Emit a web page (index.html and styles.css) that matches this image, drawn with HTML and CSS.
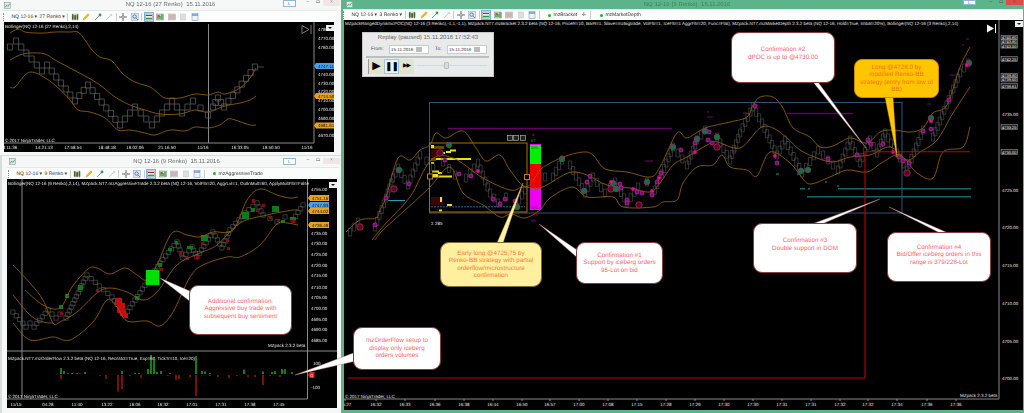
FILE: index.html
```html
<!DOCTYPE html>
<html lang="en">
<head>
<meta charset="utf-8">
<title>NQ 12-16 Renko charts</title>
<link rel="stylesheet" href="styles.css">
</head>
<body>
<svg class="sprite" aria-hidden="true">
  <symbol id="i-app" viewBox="0 0 8 8"><rect x=".5" y=".5" width="7" height="7" fill="#dfe9e6" stroke="#7a9a90" stroke-width=".6"/><path d="M1.5 6 3 3.5 4.5 5 6.5 2" fill="none" stroke="#2f8f5f" stroke-width=".8"/></symbol>
  <symbol id="i-candle" viewBox="0 0 9 8"><rect x="1" y="1" width="2" height="6" fill="#1c8c2a"/><rect x="3.6" y="2" width="2" height="5" fill="#c03030"/><rect x="6.2" y="1" width="2" height="6" fill="#1c8c2a"/><path d="M2 0v8M4.6 0v8M7.2 0v8" stroke="#333" stroke-width=".4"/></symbol>
  <symbol id="i-pencil" viewBox="0 0 8 8"><path d="M1 7 2 4.8 6 .8l1.2 1.2-4 4z" fill="#f0c020" stroke="#b08010" stroke-width=".4"/></symbol>
  <symbol id="i-arrow" viewBox="0 0 8 8"><path d="M1 7 6 2" stroke="#8a9a9a" stroke-width="1"/><circle cx="6" cy="2" r="1.4" fill="#2aa040"/></symbol>
  <symbol id="i-grey" viewBox="0 0 8 8"><path d="M1 7 6 2" stroke="#c8cccc" stroke-width="1"/><circle cx="6" cy="2" r="1.3" fill="#d4d8d8"/></symbol>
  <symbol id="i-cross" viewBox="0 0 8 8"><path d="M4 0v8M0 4h8" stroke="#444" stroke-width=".8"/><circle cx="4" cy="4" r="1.2" fill="#fff" stroke="#444" stroke-width=".5"/></symbol>
  <symbol id="i-zoom" viewBox="0 0 8 8"><rect x=".5" y=".5" width="7" height="7" fill="#dce6f0" stroke="#8aa0b8" stroke-width=".5"/><circle cx="3.6" cy="3.6" r="1.7" fill="none" stroke="#3a5a80" stroke-width=".7"/><path d="m5 5 2 2" stroke="#3a5a80" stroke-width=".7"/></symbol>
  <symbol id="i-a" viewBox="0 0 8 8"><rect x=".5" y="1" width="7" height="6" fill="#fff" stroke="#666" stroke-width=".4"/><path d="M1 2.5h6" stroke="#c02020" stroke-width="1.2"/><path d="M1 5.5h6" stroke="#20a030" stroke-width="1.6"/></symbol>
  <symbol id="i-b" viewBox="0 0 8 8"><rect x=".5" y="1" width="7" height="6" fill="#c8dcc0" stroke="#666" stroke-width=".4"/><path d="M2 2v4M4 3v3M6 1.5v5" stroke="#1c8c2a" stroke-width="1.1"/><path d="M3 2v2" stroke="#c02020"/></symbol>
  <symbol id="i-c" viewBox="0 0 8 8"><rect x=".5" y="1" width="7" height="6" fill="#d8d0d0" stroke="#999" stroke-width=".4"/><path d="M1 3h6M1 5h6" stroke="#b89090" stroke-width=".8"/></symbol>
  <symbol id="i-d" viewBox="0 0 8 8"><rect x="1.5" y="1" width="5" height="6" fill="#dde0e0" stroke="#bbb" stroke-width=".4"/></symbol>
  <symbol id="i-e" viewBox="0 0 8 8"><rect x="1" y=".5" width="6" height="7" fill="#eef3f8" stroke="#6a8aa8" stroke-width=".5"/><path d="M1 2h6" stroke="#4a80b8" stroke-width="1.2"/></symbol>
</svg>

<main class="desktop">
  <div class="left-col">
    <section class="win win-a">
      <header class="titlebar">
        <svg class="app-ic"><use href="#i-app"/></svg>
        <h2 class="title">NQ 12-16 (27 Renko)&nbsp; 15.11.2016</h2>
        <div class="controls"><span class="link-btn">L</span><span class="ctl">–</span><span class="ctl">▭</span><span class="ctl close close-pale">×</span></div>
      </header>
      <div class="toolbar">
        <span class="grip"></span><span class="tb-text">NQ 12-16 ▾</span><span class="tb-text">27 Renko ▾</span><span class="sep"></span>
        <svg class="ic"><use href="#i-candle"/></svg><svg class="ic"><use href="#i-pencil"/></svg><svg class="ic"><use href="#i-arrow"/></svg><svg class="ic"><use href="#i-grey"/></svg><span class="sep"></span>
        <svg class="ic"><use href="#i-cross"/></svg><svg class="ic"><use href="#i-zoom"/></svg><span class="sep"></span>
        <svg class="ic on"><use href="#i-a"/></svg><svg class="ic"><use href="#i-b"/></svg><svg class="ic"><use href="#i-c"/></svg><svg class="ic"><use href="#i-d"/></svg><svg class="ic"><use href="#i-e"/></svg>
      </div>
      <div class="chart chart-a">
        <svg class="plot" viewBox="4 22 330 130">
          <path class="axis" d="M314 22V143H4M208.5 24V143"/>
          <path id="bricks-a" class="bricks"/>
          <path class="bricks" d="M257 67h7"/>
          <polyline class="bb" points="10,33 18,29 25,32 35,33 45,33 55,32 70,32 78,32 85,40 92,50 100,57 112,61 122,73 135,82 150,87 158,93 165,98 180,98 195,94 208,95 218,92 225,94 240,88 250,78 256,68"/>
          <polyline class="bb" points="10,60 20,55 30,53 45,54 55,60 70,68 85,76 100,85 115,97 130,105 145,110 160,114 180,114 195,110 208,112 225,106 240,103 250,100 256,96"/>
          <polyline class="bb" points="10,87 15,87 25,75 32,72 42,76 55,85 70,100 78,110 90,112 105,118 118,130 130,130 145,133 155,135 170,130 185,131 195,127 208,128 220,125 228,119 235,120 250,125 256,125"/>
          <path class="end-ic" d="M302 25.500l7 4-7 4zM311 25v9"/>
          <text class="t" x="5" y="27.500">Bollinger(NQ 12-16 (27 Renko),2,14)</text>
          <text class="t" x="5" y="141.500">© 2017 NinjaTrader, LLC</text>
          <g class="t"><text x="318" y="31">4780.00</text><text x="318" y="40">4770.00</text><text x="318" y="48.500">4760.00</text><text x="318" y="76">4740.00</text><text x="318" y="85">4730.00</text><text x="318" y="93">4720.00</text><text x="318" y="102">4710.00</text><text x="318" y="111">4700.00</text><text x="318" y="120">4690.00</text><text x="318" y="137">4670.00</text></g>
          <path class="pill-blue" d="M316 63h18v6h-18l-2-3z"/><text class="t dk" x="318" y="67.500">4747.11</text>
          <path class="pill-or" d="M316 93h18v6h-18l-2-3z"/><text class="t dk" x="318" y="97.500">4714.50</text>
          <path class="pill-or" d="M316 122.500h18v6h-18l-2-3z"/><text class="t dk" x="318" y="127">4681.61</text>
          <g class="t mid"><text x="10" y="149">8:11:36</text><text x="44" y="149">14:21:13</text><text x="73" y="149">17:58:54</text><text x="107" y="149">18:48:18</text><text x="135" y="149">19:02:06</text><text x="167" y="149">21:16:50</text><text x="203" y="149">11/16</text><text x="240" y="149">16:33:05</text><text x="271" y="149">19:50:50</text><text x="307" y="149">11/16</text></g>
        </svg>
        <span class="dd"></span>
      </div>
    </section>

    <section class="win win-b">
      <header class="titlebar">
        <svg class="app-ic"><use href="#i-app"/></svg>
        <h2 class="title">NQ 12-16 (9 Renko)&nbsp; 15.11.2016</h2>
        <div class="controls"><span class="link-btn">L</span><span class="ctl">–</span><span class="ctl">▭</span><span class="ctl close close-pale">×</span></div>
      </header>
      <div class="toolbar">
        <span class="grip"></span><span class="tb-text">NQ 12-16 ▾</span><span class="tb-text">9 Renko ▾</span><span class="sep"></span>
        <svg class="ic"><use href="#i-candle"/></svg><svg class="ic"><use href="#i-pencil"/></svg><svg class="ic"><use href="#i-arrow"/></svg><svg class="ic"><use href="#i-grey"/></svg><span class="sep"></span>
        <svg class="ic"><use href="#i-cross"/></svg><svg class="ic"><use href="#i-zoom"/></svg><span class="sep"></span>
        <svg class="ic on"><use href="#i-a"/></svg><svg class="ic"><use href="#i-b"/></svg><svg class="ic"><use href="#i-c"/></svg><svg class="ic"><use href="#i-d"/></svg><svg class="ic"><use href="#i-e"/></svg><span class="sep"></span>
        <span class="dot"></span><span class="tb-text">mzAggressiveTrade</span>
      </div>
      <div class="chart chart-b">
        <svg class="plot" viewBox="7 179 330 229">
          <path class="axis" d="M307.500 179V399H7M7 351H337M22 179V399"/>
          <path id="bricks-b" class="bricks bricks-b"/>
          <path class="blk-g" d="M78 285h5v5h-5zM65 294h4v4h-4zM59 305h4v4h-4zM135 296h4v4h-4zM158 263h4v4h-4zM168 248h4v3h-4zM175 241h3v3h-3zM187 246h6v3h-6zM201 235h7v6h-7zM242 212h7v7h-7zM251 208h4v4h-4zM272 206h7v6h-7zM281 220h4v3h-4zM290 217h6v3h-6z"/>
          <path class="blk-r" d="M96 289h3v3h-3zM60 312h3v3h-3zM179 252h3v3h-3zM186 257h3v3h-3zM196 256h3v3h-3zM201 242h3v3h-3zM227 247h3v3h-3zM252 199h3v4h-3zM262 204h3v3h-3zM256 209h3v3h-3zM269 216h3v3h-3zM277 219h3v3h-3zM292 220h3v3h-3zM226 239h3v3h-3zM160 268h3v3h-3z"/>
          <path class="blk-hot" d="M115 298h7v7h-7zM117 303h8v10h-8zM120 310h6v6h-6zM124 314h4v4h-4z"/>
          <polyline class="bb" points="25,290 43,305 60,308 72,287 88,269 97,268 110,274 125,268 137,275 147,280 157,265 172,233 187,235 200,237 213,232 233,230 247,200 260,189 277,195 290,198 298,197"/>
          <polyline class="bb" points="13,265 30,283 43,300 53,323 60,322 77,312 97,293 110,288 127,292 143,300 157,292 177,265 200,253 217,245 240,223 267,215 293,210 298,210"/>
          <polyline class="bb" points="13,295 30,315 43,322 53,323"/>
          <polyline class="bb" points="13,323 30,340 53,337 70,340 93,322 107,300 117,307 127,321 147,321 160,326 173,312 190,277 203,265 227,257 240,257 260,245 277,224 287,223 298,225"/>
          <rect class="big-g" x="146" y="270" width="13.500" height="15"/>
          <g class="hist-g"><path d="M61 374V368M64 374V371M77 374V373M80 374V373.500M85 374V372M122 374V371M148 374V369M151 374V355M154 374V360M157 374V372M161 374V371M196 374V356M202 374V371M205 374V371.500M244 374V369.500M263 374V371.500M272 374V372M275 374V371M282 374V369M285 374V369M292 374V372M68 374V373M72 374V373M135 374V373M139 374V373M170 374V373M210 374V373"/></g>
          <g class="hist-r"><path d="M61 375V379M106 375V379M118 375V391.500M122 375V389M141 375V378M176 375V380M179 375V379M196 375V396M218 375V377M229 375V378M248 375V377M255 375V377M263 375V385M280 375V377M100 375V376M130 375V376M168 375V376M190 375V377M210 375V376M237 375V376M270 375V376"/></g>
          <text class="t" x="8" y="184.500">Bollinger(NQ 12-16 (9 Renko),2,14), MZpack.NT7.mzAggressiveTrade 2.3.2 beta (NQ 12-16, VolFltr=20, AggrLvl=1, OutlnMult=60, ApplyMultFltr=False</text>
          <text class="t" x="8" y="359.500">MZpack.NT7.mzOrderFlow 2.3.2 beta (NQ 12-16, Recnstct=True, Exp=60, TickTr=10, Ice=20)</text>
          <text class="t" x="8" y="398">© 2017 NinjaTrader, LLC</text>
          <text class="t" x="268" y="346.500">MZpack 2.3.2 beta</text>
          <g class="t"><text x="311" y="191">4755.00</text><text x="311" y="234.500">4735.00</text><text x="311" y="245">4730.00</text><text x="311" y="256">4725.00</text><text x="311" y="266.500">4720.00</text><text x="311" y="277">4715.00</text><text x="311" y="288.500">4710.00</text><text x="311" y="298.500">4705.00</text><text x="311" y="309.500">4700.00</text><text x="311" y="320.500">4695.00</text><text x="311" y="331">4690.00</text><text x="311" y="342">4685.00</text><text x="313" y="365">100</text><text x="311" y="389">-100</text></g>
          <path class="pill-or" d="M310 195h19v6h-19l-2-3z"/><text class="t dk" x="312" y="199.500">4751.16</text>
          <path class="pill-blue" d="M310 202h19v6h-19l-2-3z"/><text class="t dk" x="312" y="206.500">4747.83</text>
          <path class="pill-or" d="M310 208h19v6h-19l-2-3z"/><text class="t dk" x="312" y="212.500">4744.02</text>
          <path class="pill-or" d="M310 222h19v6h-19l-2-3z"/><text class="t dk" x="312" y="226.500">4736.49</text>
          <path class="pill-red" d="M310 372h4.500v6h-4.500l-2-3z"/><text class="t" x="310.500" y="376.500">0</text>
          <g class="t mid"><text x="16" y="406">11/15</text><text x="48" y="406">04:28</text><text x="77" y="406">11:40</text><text x="107" y="406">13:22</text><text x="135" y="406">16:06</text><text x="163" y="406">16:32</text><text x="192" y="406">17:01</text><text x="221" y="406">17:31</text><text x="250" y="406">17:38</text><text x="279" y="406">17:45</text></g>
        </svg>
        <span class="dd"></span>
      </div>
    </section>
  </div>

  <section class="win win-main">
    <header class="titlebar">
      <svg class="app-ic"><use href="#i-app"/></svg>
      <h2 class="title">NQ 12-16 (3 Renko)&nbsp; 15.11.2016</h2>
      <div class="controls"><span class="link-btn">L</span><span class="ctl">–</span><span class="ctl">▭</span><span class="ctl close">×</span></div>
    </header>
    <div class="toolbar">
      <span class="grip"></span><span class="tb-text">NQ 12-16 ▾</span><span class="tb-text">3 Renko ▾</span><span class="sep"></span>
      <svg class="ic"><use href="#i-candle"/></svg><svg class="ic"><use href="#i-pencil"/></svg><svg class="ic"><use href="#i-arrow"/></svg><svg class="ic"><use href="#i-grey"/></svg><span class="sep"></span>
      <svg class="ic"><use href="#i-cross"/></svg><svg class="ic"><use href="#i-zoom"/></svg><span class="sep"></span>
      <svg class="ic on"><use href="#i-a"/></svg><svg class="ic"><use href="#i-b"/></svg><svg class="ic"><use href="#i-c"/></svg><svg class="ic"><use href="#i-d"/></svg><svg class="ic"><use href="#i-e"/></svg><span class="sep"></span>
      <span class="dot"></span><span class="tb-text">mzBracket</span><span class="tb-plus">✛</span><span class="sep"></span>
      <span class="dot"></span><span class="tb-text">mzMarketDepth</span>
    </div>
    <div class="chart chart-main">
      <svg class="plot" viewBox="344 20 679 390">
        <path class="axis" d="M999 20V399H344"/>
        <path class="axis" d="M345 399v2M376 399v2M405 399v2M435 399v2M464 399v2M493 399v2M522 399v2M550 399v2M579 399v2M608 399v2M637 399v2M666 399v2M695 399v2M724 399v2M753 399v2M782 399v2M811 399v2M840 399v2M868 399v2M897 399v2M927 399v2M956 399v2"/>
        <rect class="zone" x="429.500" y="102.500" width="472.500" height="110.500"/>
        <path class="purple" d="M448 128.500H672M787 113.500H853"/>
        <path class="purple-dash" d="M645 161h8M707 112h2M707 117h6M743 113h4M733 151h4M927 104h4M950 75h5M962 45h2M966 39h3M905 79h2"/>
        <path class="darkred" d="M431 150h9v7h-9zM431 197h12v8h-12z"/>
        <path class="olive" d="M431 146h13v3h-13zM431 158h5v3h-5z"/>
        <path class="yellow" d="M431 145h3v3h-3zM438 152h7v2h-7zM446 151h5v2h-5zM450 149.500h6v2h-6zM436 158h35v2h-35zM431 162h3v2h-3zM432 170.500h7v2h-7zM438 172h4v2h-4zM432 175.500h20v2h-20zM432 174h6v2h-6zM440 197h2v5h-2zM447 204h5v2h-5zM439 209.500h3v2h-3z"/>
        <path class="cyan-dash" d="M431 206.800H525"/>
        <path class="cyan" d="M388 200.500h17"/>
        <rect class="obox" x="429.500" y="143" width="97.500" height="69"/>
        <rect class="ohandle" x="427.500" y="174" width="5" height="5"/>
        <rect class="ohandle" x="524.500" y="174.500" width="5" height="5"/>
        <g class="mini"><rect x="507.500" y="135.500" width="5" height="5"/><rect x="513.500" y="135.500" width="5" height="5"/><rect x="520.500" y="135.500" width="5" height="5"/></g>
        <rect class="h-mag" x="530" y="144" width="11" height="1.500"/>
        <rect class="h-grn" x="530" y="145" width="11" height="19"/>
        <rect class="h-red" x="530" y="164" width="11" height="24"/>
        <rect class="h-mag" x="530" y="188" width="11" height="22"/>
        <path id="bricks-main" class="bricks bricks-thin"/>
        <polyline class="bb" points="346,232 360,220 376,218 380,210 386,197 398,158 410,160 420,150 430,145 436,133 446,138 463,131 476,148 486,161 500,155 510,170 526,187 540,170 547,165 563,157 583,152 593,155 605,169 627,172 650,177 660,167 677,133 687,138 705,128 730,122 747,117 753,105 760,97 773,97 783,108 793,128 810,137 820,147 833,146 850,138 867,143 880,132 893,130 910,132 923,128 933,113 947,105 960,67 970,47"/>
        <polyline class="bb" points="372,240 386,223 410,197 431,160 453,158 483,178 510,190 523,187 540,188 560,177 572,172 587,175 607,185 630,188 650,192 660,183 673,165 687,157 707,145 717,142 740,148 760,128 773,128 787,138 800,150 817,158 833,162 850,157 870,155 890,147 907,160 920,152 937,140 953,113 970,87"/>
        <polyline class="bb" points="375,240 383,230 413,203 430,187 450,167 463,193 483,205 500,217 511,214 525,218 540,210 550,198 572,187 587,197 613,197 623,207 653,207 663,202 677,200 683,183 697,167 713,165 722,155 730,167 747,170 757,176 770,152 790,163 800,175 810,184 830,177 847,170 867,172 883,162 900,155 917,173 933,178 943,152 963,147 970,127"/>
        <g id="dots"></g>
        <path class="teal" d="M838 188.700H971M807 196.700H971M800 188.700h5M808 188.700h2M776 174h3M797 174h2M825 182h2M837 186h2"/>
        <path class="redline" d="M348 378H865V151.700H970"/>
        <path class="end-main" d="M987 24.500l7 4-7 4z"/><path class="end-main-bar" d="M995.500 24v9"/>
        <text class="t" x="345" y="25">MZpackRangedDynamicPOC(NQ 12-16 (3 Renko),-1,1,-1,1), MZpack.NT7.mzBracket 2.3.2 beta (NQ 12-16, PriceR=10, BarR=1, Slave=mzBigtrade, VolFltr=1, IceFltr=1 AggrFltr=20, Func=Flat), MZpack.NT7.mzMarketDepth 2.3.2 beta (NQ 12-16, Hold=True, Imbal=20%), Bollinger(NQ 12-16 (3 Renko),2,14)</text>
        <text class="t" x="431" y="225">Σ 285</text>
        <text class="t tiny-mag" x="532" y="135.500">4</text><text class="t tiny-grn" x="531" y="142">67</text>
        <text class="t tiny-dk" x="531" y="149">20%</text><text class="t tiny-dk" x="531" y="209">50%</text>
        <text class="t tiny-red" x="531" y="216">196</text><text class="t tiny-mag" x="531" y="222">95</text>
        <text class="t" x="345" y="398">© 2017 NinjaTrader, LLC</text>
        <text class="t" x="960" y="396.500">MZpack 2.3.2 beta</text>
        <g class="t"><text x="1002" y="116">4735.00</text><text x="1002" y="191.500">4725.00</text><text x="1002" y="229">4720.00</text><text x="1002" y="267">4715.00</text><text x="1002" y="304.500">4710.00</text><text x="1002" y="343">4705.00</text><text x="1002" y="380">4700.00</text></g>
        <g class="boxed"><rect x="1001" y="35.500" width="16.500" height="4.200"/><rect x="1001" y="39.700" width="16.500" height="4.200"/><rect x="1001" y="43.900" width="16.500" height="4.200"/><rect x="1001" y="56.500" width="16.500" height="5"/><rect x="1001" y="73.500" width="16.500" height="4.200"/><rect x="1001" y="77.700" width="16.500" height="4.200"/><rect x="1001" y="83.500" width="16.500" height="5"/><rect x="1001" y="124.500" width="16.500" height="5"/><rect x="1001" y="149.500" width="16.500" height="5"/></g>
        <g class="t t-stack"><text x="1002" y="39.200">4745.80</text><text x="1002" y="43.400">4743.80</text><text x="1002" y="47.600">4743.50</text><text x="1002" y="60.500">4742.25</text><text x="1002" y="77.200">4739.80</text><text x="1002" y="81.400">4739.50</text><text x="1002" y="87.500">4738.61</text><text x="1002" y="128.500">4733.25</text><text x="1002" y="153.500">4730.00</text></g>
        <g class="t mid"><text x="347" y="406">6:27</text><text x="376" y="406">16:32</text><text x="405" y="406">16:33</text><text x="435" y="406">16:36</text><text x="464" y="406">16:38</text><text x="493" y="406">16:44</text><text x="522" y="406">16:50</text><text x="550" y="406">16:57</text><text x="579" y="406">17:00</text><text x="608" y="406">17:08</text><text x="637" y="406">17:15</text><text x="666" y="406">17:28</text><text x="695" y="406">17:29</text><text x="724" y="406">17:30</text><text x="753" y="406">17:30</text><text x="782" y="406">17:31</text><text x="811" y="406">17:31</text><text x="840" y="406">17:32</text><text x="868" y="406">17:32</text><text x="897" y="406">17:34</text><text x="927" y="406">17:36</text><text x="956" y="406">17:36</text></g>
      </svg>
      <span class="dd dd-main"></span>

      <aside class="replay">
        <div class="replay-title">Replay (paused) 15.11.2016 17:52:43</div>
        <div class="replay-dates">
          <span class="rp-lbl">From:</span><span class="rp-date">15.11.2016<i class="rp-cal"></i></span>
          <span class="rp-lbl rp-to">To:</span><span class="rp-date">15.11.2016<i class="rp-cal"></i></span>
        </div>
        <div class="replay-sep"></div>
        <div class="replay-ctl">
          <span class="rp-btn">▶</span><span class="rp-btn rp-sel">❚❚</span><span class="rp-btn rp-ff">▶▶</span>
          <span class="rp-slider"><i class="rp-thumb"></i></span>
        </div>
      </aside>
    </div>
  </section>

  <svg class="tails" viewBox="0 0 1024 413">
    <polygon class="tail" points="160,278 192,292 192,303"/>
    <polygon class="tail" points="295,375 356,352 356,361"/>
    <polygon class="tail tail-y" points="523,183 497,243 503,243"/>
    <polygon class="tail" points="539,224 580,252 580,260"/>
    <polygon class="tail" points="866,148 813,82 818,82"/>
    <polygon class="tail tail-o" points="897,157 885,97 893,97"/>
    <polygon class="tail" points="880,199 812,224 822,224"/>
    <polygon class="tail" points="889,207 940,233 948,233"/>
  </svg>

  <div class="note n-add">Additional confirmation.<br>Aggressive buy trade with<br>subsequent buy sentiment</div>
  <div class="note n-flow">mzOrderFlow setup to<br>display only iceberg<br>orders volumes</div>
  <div class="note note-y n-early">Early long @4725,75 by<br>Renko-BB strategy with partial<br>orderflow/microstructure<br>confirmation</div>
  <div class="note n-c1">Confirmation #1<br>Support by iceberg orders<br>95-Lot on bid</div>
  <div class="note n-c2">Confirmation #2<br>dPOC is up to @4730.00</div>
  <div class="note note-o n-long">Long @4728.0 by<br>modified Renko-BB<br>strategy (entry from low of<br>BB)</div>
  <div class="note n-c3">Confirmation #3<br>Double support in DOM</div>
  <div class="note n-c4">Confirmation #4<br>Bid/Offer iceberg orders in this<br>range is 379/228-Lot</div>
</main>
<script src="chart.js"></script>
</body>
</html>
```

FILE: styles.css
```css
* { box-sizing: border-box; margin: 0; padding: 0; }
html, body { width: 1024px; height: 413px; overflow: hidden; background: #f4f6f6; }
body { font-family: "Liberation Sans", Arial, sans-serif; text-rendering: geometricPrecision; }
.sprite { display: none; }

.desktop {
  position: relative;
  display: grid;
  grid-template-columns: 341px 683px;
  width: 1024px;
  height: 413px;
  filter: blur(0.4px);
}
.left-col { display: flex; flex-direction: column; gap: 2px; }

.win { display: flex; flex-direction: column; background: #f6f8f8; min-height: 0; }
.win-a { height: 153px; padding: 0 7px 1px 4px; }
.win-b { height: 258px; padding: 0 4px 5px 5px; border-left: 2px solid #d8dcdc; border-top: 1px solid #d8dcdc; }
.win-main { height: 413px; background: #5cb48a; padding: 0 1px 3px 3px; }

.titlebar { display: flex; align-items: center; position: relative; flex: none; }
.win-a .titlebar { height: 10px; margin-left: -2px; }
.win-b .titlebar { height: 11px; }
.win-main .titlebar { height: 9px; }
.app-ic { width: 7px; height: 7px; margin-left: 2px; flex: none; }
.title { flex: 1; text-align: center; font-size: 5.900px; font-weight: normal; color: #666; white-space: nowrap; word-spacing: .2px; }
.win-a .title { padding-right: 4px; }
.win-main .title { color: #3f7d60; padding-right: 2px; }
.controls { position: absolute; right: 0; top: 0; display: flex; align-items: flex-start; height: 7px; }
.win-a .controls { right: -6px; }
.win-b .controls { right: -3px; top: 2px; }
.link-btn { width: 13px; height: 7px; border: 1px solid #8fb8dc; background: #fff; color: #667; font-size: 4.500px; line-height: 5px; text-align: center; margin-right: 7px; }
.ctl { width: 10px; height: 6px; font-size: 5px; line-height: 5px; text-align: center; color: #555; }
.close { width: 17px; background: #f0f0f0; color: #888; margin-left: 0; }
.win-main .close { background: #df4a4a; color: #fff; height: 5px; }
.win-main .ctl { color: #2e5c46; }
.win-main .link-btn { height: 5px; line-height: 3px; margin-right: 10px; }
.close-pale { background: #f1e6e6; }

.toolbar { display: flex; align-items: center; flex: none; gap: 2.500px; background: #fbfcfc; border-top: 1px solid #e4e8e8; }
.win-a .toolbar { height: 12px; margin-left: -2px; margin-right: -2px; padding-left: 1px; }
.win-b .toolbar { height: 12px; margin-right: -2px; padding-left: 1px; }
.win-main .toolbar { height: 11px; margin-left: -1px; }
.grip { width: 1px; height: 8px; border-left: 1px dotted #888; margin-right: 5px; }
.tb-text { font-size: 5px; color: #333; white-space: nowrap; }
.sep { width: 1px; height: 8px; background: #c8cccc; }
.ic { width: 8px; height: 8px; flex: none; }
.ic.on { outline: 1px solid #7fb2e0; background: #d8e8f8; }
.ic + .ic { margin-left: 1px; }
.dot { width: 3px; height: 3px; border-radius: 50%; background: #18b828; margin-left: 6px; flex: none; }
.tb-plus { font-size: 5px; color: #444; margin: 0 2px; }

.chart { position: relative; flex: 1; background: #000; min-height: 0; }
.plot { display: block; width: 100%; height: 100%; overflow: hidden; }
.dd { position: absolute; right: 0; top: 3px; width: 8px; height: 6px; background: #eef0f0; }
.dd::after { content: ""; position: absolute; left: 2px; top: 2px; border: 2px solid transparent; border-top: 2px solid #111; }
.dd-main { top: 1px; right: 0; }

.axis { stroke: #8a8a8a; stroke-width: 1; fill: none; }
.bb { fill: none; stroke: #8c5c0c; stroke-width: .9; stroke-linejoin: round; }
.bricks { fill: none; stroke: #666; stroke-width: .7; }
.bricks-b { stroke: #5e5e5e; stroke-width: .6; }
.bricks-thin { stroke: #565656; stroke-width: .6; }
.end-ic { fill: none; stroke: #999; stroke-width: .8; }
.end-main { fill: #f4f4f4; }
.end-main-bar { stroke: #f4f4f4; stroke-width: 1; }
.t { font-family: "Liberation Sans", Arial, sans-serif; font-size: 4.500px; fill: #e4e4e4; }
.t-stack { font-size: 4px; }
.t.dk { fill: #1c1408; }
.mid text { text-anchor: middle; }
.pill-blue { fill: #4aa0e8; }
.pill-or { fill: #e8a020; }
.pill-red { fill: #e02020; }
.blk-g { fill: #0c7a1c; }
.blk-r { fill: #8c0a0a; }
.blk-hot { fill: #c80c0c; }
.big-g { fill: #00e000; }
.hist-g path { stroke: #18d818; stroke-width: 1.200; fill: none; }
.hist-r path { stroke: #d01818; stroke-width: 1.200; fill: none; }

.zone { fill: none; stroke: #34527c; stroke-width: 1; }
.purple { stroke: #600460; stroke-width: 1.300; fill: none; }
.purple-dash { stroke: #6a0c6a; stroke-width: 1; fill: none; }
.darkred { fill: #3c0404; }
.olive { fill: #5c4a06; }
.yellow { fill: #e8e010; }
.cyan-dash { stroke: #2a88c0; stroke-width: .8; stroke-dasharray: 2 1; fill: none; }
.cyan { stroke: #20a0b0; stroke-width: 1; fill: none; }
.obox { fill: none; stroke: #b06c04; stroke-width: 1; }
.ohandle { fill: #000; stroke: #c07c10; stroke-width: 1; }
.mini rect { fill: #222; stroke: #aaa; stroke-width: .7; }
.h-mag { fill: #f000f0; }
.h-grn { fill: #00f000; }
.h-red { fill: #ee0000; }
.tiny-mag { fill: #b000b0; font-size: 4px; }
.tiny-grn { fill: #18a818; font-size: 4px; }
.tiny-dk { fill: #333; font-size: 3.500px; }
.tiny-red { fill: #a01010; font-size: 4px; }
.teal { stroke: #0c6c6c; stroke-width: 1.600; fill: none; }
.redline { fill: none; stroke: #c00000; stroke-width: 1.100; }
.boxed rect { fill: #222; stroke: #aaa; stroke-width: .5; }

.mk-a { fill: #70106a; stroke: #c020a8; stroke-width: .8; }
.mk-b { fill: #5c0420; stroke: #a02a60; stroke-width: .8; }
.mk-c { fill: #0a7a2a; stroke: #80308a; stroke-width: .8; }
.mk-d { fill: #ff0090; stroke: #a8108a; stroke-width: .6; }

.replay { position: absolute; left: 18px; top: 12px; width: 132px; height: 45px; background: #e9ebeb; border: 1px solid #c4c8c8; color: #666; display: flex; flex-direction: column; }
.replay-title { font-size: 6px; text-align: center; height: 11px; line-height: 11px; }
.replay-dates { display: flex; align-items: center; height: 10px; padding-left: 8px; }
.rp-lbl { font-size: 4.800px; width: 18px; color: #444; }
.rp-to { width: 12px; margin-left: 6px; }
.rp-date { display: flex; align-items: center; width: 40px; height: 9px; background: #fff; border: 1px solid #c8cccc; font-size: 4.500px; color: #333; padding-left: 1px; }
.rp-cal { width: 6px; height: 5px; background: #bbb; margin-left: auto; margin-right: 6px; }
.replay-sep { height: 2px; margin: 2px 4px 1px 3px; background: #bcbfbf; }
.replay-ctl { display: flex; align-items: stretch; height: 15px; margin-left: 5px; border-left: 1px solid #999; }
.rp-btn { width: 15px; background: #e2e4d2; color: #000; font-size: 11px; line-height: 14px; text-align: center; overflow: hidden; }
.rp-sel { outline: 1px solid #9cc4e8; outline-offset: -1px; background: #eef2f0; font-size: 9px; letter-spacing: -1px; }
.rp-ff { font-size: 6px; letter-spacing: -1px; }
.rp-slider { position: relative; width: 70px; height: 1px; margin: 6px 0 0 3px; background: #cdd; }
.rp-thumb { position: absolute; left: 27px; top: -3px; width: 5px; height: 7px; background: #dcdcdc; border: 1px solid #bbb; border-radius: 1px; }

.tails { position: absolute; left: 0; top: 0; width: 1024px; height: 413px; pointer-events: none; }
.tail { fill: #fff; stroke: #c07070; stroke-width: .4; }
.tail-y { fill: #fff2a0; stroke: #c8a050; }
.tail-o { fill: #ffc800; stroke: #d8a000; }

.note {
  position: absolute;
  display: flex;
  align-items: center;
  justify-content: center;
  text-align: center;
  font-size: 6.300px;
  line-height: 7.500px;
  background: #fff;
  color: #ff5f6c;
  border: 1px solid #8a3a3a;
  border-radius: 9px;
  white-space: nowrap;
}
.note-y { background: #fff0a0; color: #f57a3a; border-color: #7c6a30; }
.note-o { background: #ffc600; color: #f2701c; border-color: #c88a00; }
.n-add { left: 189px; top: 285px; width: 103px; height: 50px; padding-bottom: 2px; }
.n-flow { left: 353px; top: 327px; width: 88px; height: 43px; }
.n-early { left: 440px; top: 242px; width: 102px; height: 45px; }
.n-c1 { left: 576px; top: 242px; width: 87px; height: 42px; }
.n-c2 { left: 731px; top: 32px; width: 104px; height: 51px; padding-bottom: 8px; }
.n-long { left: 854px; top: 59px; width: 85px; height: 39px; border-radius: 8px; }
.n-c3 { left: 753px; top: 223px; width: 104px; height: 50px; padding-bottom: 7px; }
.n-c4 { left: 887px; top: 232px; width: 104px; height: 50px; padding-bottom: 4px; }
```

FILE: chart.js
```js
// Renko bricks walked between turning points, smoothed band curves, order-flow markers.
var SVG_NS = "http://www.w3.org/2000/svg";

function renko(id, w, h, dy, series) {
  var d = "";
  function brick(x, y) {
    d += "M" + (x - w / 2).toFixed(1) + " " + (y - h / 2).toFixed(1) + "h" + w + "v" + h + "h" + (-w) + "z";
  }
  series.forEach(function (pts) {
    for (var i = 0; i < pts.length - 1; i++) {
      var a = pts[i], b = pts[i + 1];
      var n = Math.max(1, Math.round(Math.abs(b[1] - a[1]) / dy));
      for (var k = 0; k < n; k++) {
        brick(a[0] + (b[0] - a[0]) * k / n, a[1] + (b[1] - a[1]) * k / n);
      }
    }
    var e = pts[pts.length - 1];
    brick(e[0], e[1]);
  });
  document.getElementById(id).setAttribute("d", d);
}

renko("bricks-a", 5.2, 6, 6, [
  [[10,47],[16,41],[42,71],[47,65],[75,101],[88,85],[120,125],[135,107],[152,125],[172,101],[182,113],[193,101],[208,115]],
  [[213,107],[218,98],[224,107],[255,67]]
]);

renko("bricks-b", 4.3, 4.3, 3.7, [
  [[13,312],[26,327],[30,323],[34,327],[48,310],[56,318],[60,314],[66,318],[87,275],[112,297],[125,315],[160,263],[177,242],[183,258],[192,247],[197,257],[213,232],[222,248],[230,230],[245,213],[257,203],[263,215],[277,222],[285,217],[293,220],[303,205]]
]);

renko("bricks-main", 3.3, 8, 5.5, [
  [[350,232],[358,222],[375,227],[386,198],[393,178],[398,168],[408,185],[420,155],[433,167],[443,162],[455,175],[466,178],[478,163],[490,193],[498,203],[506,197],[516,205],[525,190]],
  [[545,177],[553,177],[562,160],[570,165],[585,193],[593,177],[605,193],[615,182],[627,203],[638,187],[647,182],[655,190],[673,147],[687,165],[697,140],[705,130],[717,137],[730,160],[740,133],[753,107],[762,123],[777,155],[785,140],[802,173],[818,150],[838,170],[850,140],[860,163],[870,140],[877,153],[885,133],[900,158],[907,170],[923,130],[933,137],[960,73],[968,63]]
]);

// Turn each band polyline into a smooth Catmull-Rom curve.
Array.prototype.forEach.call(document.querySelectorAll("polyline.bb"), function (line) {
  var p = line.getAttribute("points").trim().split(/\s+/).map(function (s) { return s.split(",").map(Number); });
  var d = "M" + p[0][0] + " " + p[0][1];
  for (var i = 0; i < p.length - 1; i++) {
    var p0 = p[Math.max(0, i - 1)], p1 = p[i], p2 = p[i + 1], p3 = p[Math.min(p.length - 1, i + 2)];
    d += "C" + (p1[0] + (p2[0] - p0[0]) / 6).toFixed(1) + " " + (p1[1] + (p2[1] - p0[1]) / 6).toFixed(1) + " " +
         (p2[0] - (p3[0] - p1[0]) / 6).toFixed(1) + " " + (p2[1] - (p3[1] - p1[1]) / 6).toFixed(1) + " " + p2[0] + " " + p2[1];
  }
  var path = document.createElementNS(SVG_NS, "path");
  path.setAttribute("class", "bb");
  path.setAttribute("d", d);
  line.parentNode.replaceChild(path, line);
});

var marks = {
  a: [[590,176],[587,182],[620,184],[621,188],[627,200],[627,203],[637,192],[642,193],[652,195],[657,182],[661,173],[681,150],[695,143],[709,132],[708,140],[712,143],[755,106],[375,225],[386,198],[409,184],[459,174],[471,176],[493,199],[500,204],[505,199],[515,201],[445,160],[777,163],[828,159],[857,155],[868,140],[871,144],[883,144],[899,157],[903,161],[909,163],[923,131],[931,129],[949,100]],
  b: [[611,189],[717,147],[639,205],[360,227],[394,189],[440,153],[907,173]],
  c: [[562,159],[673,147],[697,139],[705,131],[717,137],[584,191],[613,183],[616,189],[647,182],[399,170],[517,207],[449,145],[801,171],[808,170],[931,118],[969,63]],
  d: [[611,182],[633,189],[652,191],[659,178],[695,152],[478,171],[775,156],[893,152],[931,121],[967,65]]
};
var radius = { a: 2, b: 3.2, c: 2.8, d: 1.8 };
var layer = document.getElementById("dots");
Object.keys(marks).forEach(function (kind) {
  marks[kind].forEach(function (p) {
    var c = document.createElementNS(SVG_NS, "circle");
    c.setAttribute("cx", p[0]);
    c.setAttribute("cy", p[1]);
    c.setAttribute("r", radius[kind]);
    c.setAttribute("class", "mk-" + kind);
    layer.appendChild(c);
  });
});
```
